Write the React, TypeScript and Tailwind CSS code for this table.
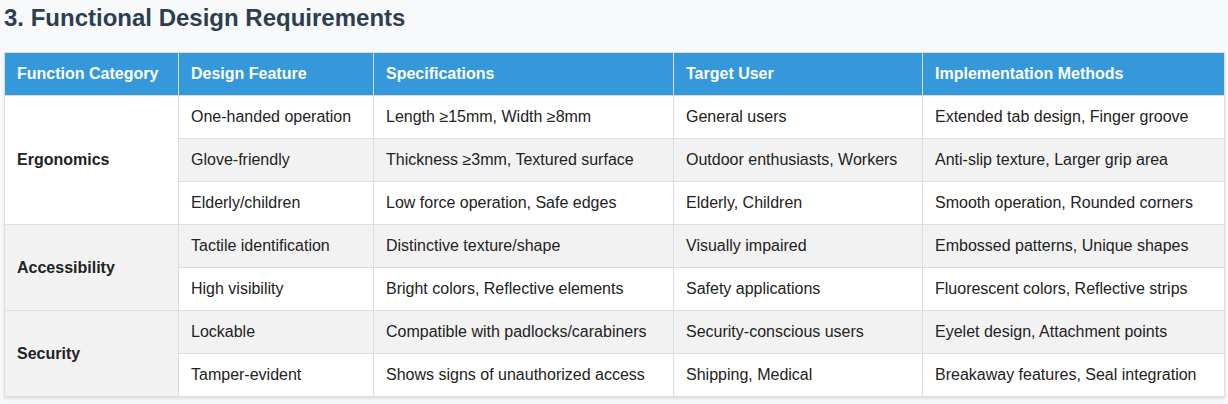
const rows = [
  { cat: "Ergonomics", span: 3, feature: "One-handed operation", spec: "Length ≥15mm, Width ≥8mm", user: "General users", impl: "Extended tab design, Finger groove" },
  { feature: "Glove-friendly", spec: "Thickness ≥3mm, Textured surface", user: "Outdoor enthusiasts, Workers", impl: "Anti-slip texture, Larger grip area" },
  { feature: "Elderly/children", spec: "Low force operation, Safe edges", user: "Elderly, Children", impl: "Smooth operation, Rounded corners" },
  { cat: "Accessibility", span: 2, feature: "Tactile identification", spec: "Distinctive texture/shape", user: "Visually impaired", impl: "Embossed patterns, Unique shapes" },
  { feature: "High visibility", spec: "Bright colors, Reflective elements", user: "Safety applications", impl: "Fluorescent colors, Reflective strips" },
  { cat: "Security", span: 2, feature: "Lockable", spec: "Compatible with padlocks/carabiners", user: "Security-conscious users", impl: "Eyelet design, Attachment points" },
  { feature: "Tamper-evident", spec: "Shows signs of unauthorized access", user: "Shipping, Medical", impl: "Breakaway features, Seal integration" },
];

const cell = "border border-[#ddd] px-3 py-3 text-left leading-[18px]";

export default function App() {
  return (
    <div className="min-h-[404px] bg-[#f8f9fa] px-1 pt-1 font-['Liberation_Sans',Arial,sans-serif]">
      <h2 className="mb-5 text-[24px] font-bold leading-7 text-[#2c3e50]">
        3. Functional Design Requirements
      </h2>
      <table className="w-[1220px] table-fixed border-collapse bg-white text-[16px] text-[#222] shadow-[0_2px_3px_rgba(0,0,0,0.1)]">
        <colgroup>
          <col className="w-[174px]" />
          <col className="w-[195px]" />
          <col className="w-[300px]" />
          <col className="w-[249px]" />
          <col className="w-[302px]" />
        </colgroup>
        <thead>
          <tr className="bg-[#3498db] text-white">
            {["Function Category", "Design Feature", "Specifications", "Target User", "Implementation Methods"].map((h) => (
              <th key={h} className={`${cell} font-bold`}>
                {h}
              </th>
            ))}
          </tr>
        </thead>
        <tbody>
          {rows.map((r, i) => (
            <tr key={r.feature} className={i % 2 === 1 ? "bg-[#f2f2f2]" : "bg-white"}>
              {r.cat && (
                <td rowSpan={r.span} className={`${cell} font-bold`}>
                  {r.cat}
                </td>
              )}
              <td className={cell}>{r.feature}</td>
              <td className={cell}>{r.spec}</td>
              <td className={cell}>{r.user}</td>
              <td className={cell}>{r.impl}</td>
            </tr>
          ))}
        </tbody>
      </table>
    </div>
  );
}
